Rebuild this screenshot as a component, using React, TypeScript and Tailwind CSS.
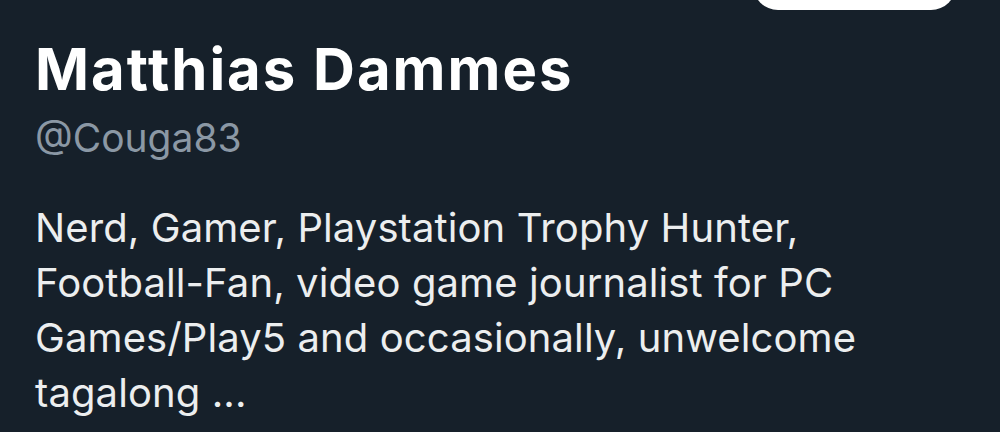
export default function App() {
  return (
    <div className="w-[1000px] h-[432px] overflow-hidden bg-[#16202a] relative" style={{ fontFamily: 'Inter, "Noto Sans", sans-serif' }}>
      {/* follow button, cut off at the top */}
      <div className="absolute left-[753px] top-[-40px] w-[203px] h-[50px] rounded-full bg-white" />
      <div className="pl-[35px] pt-[35px] pr-[40px]">
        <h1 className="text-[58px] leading-[68px] font-bold text-white tracking-[2px]">Matthias Dammes</h1>
        <p className="mt-[10px] text-[39px] leading-[50px] text-[#8b98a5]">@Couga83</p>
        <p className="mt-[37px] text-[40px] leading-[55px] text-[#eceeef] tracking-[0.1px] w-[880px]">
          Nerd, Gamer, Playstation Trophy Hunter, Football-Fan, video game journalist for PC Games/Play5 and occasionally, unwelcome tagalong ...
        </p>
      </div>
    </div>
  )
}
